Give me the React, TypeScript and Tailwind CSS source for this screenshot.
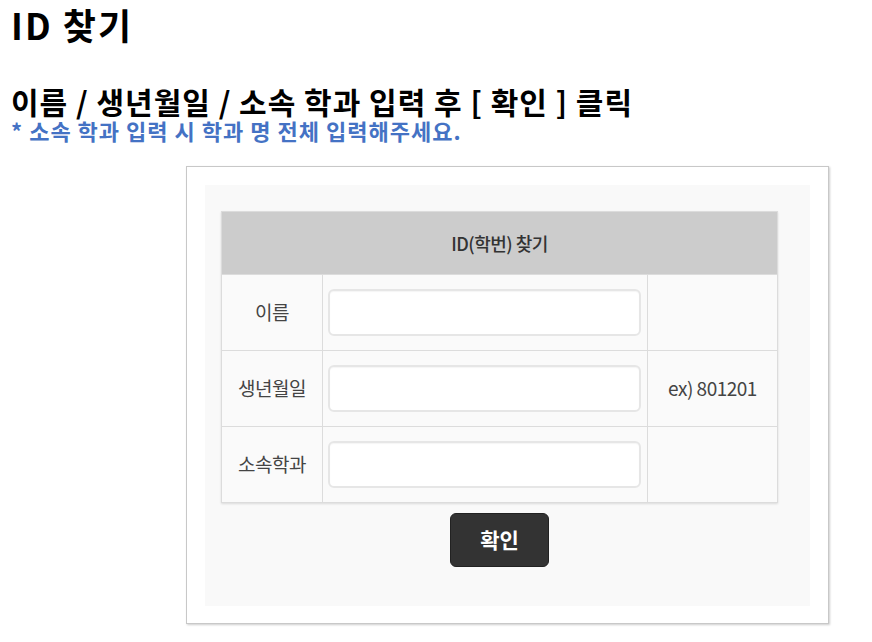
const font = "font-['Noto_Sans_CJK_KR','Noto_Sans',sans-serif]";

const rows = [
  { label: "이름", hint: "" },
  { label: "생년월일", hint: "ex) 801201" },
  { label: "소속학과", hint: "" },
];

export default function App() {
  return (
    <div className={`${font} min-h-[642px] bg-white text-black`}>
      <div className="pl-[11px]">
        <h1 className="h-[50px] text-[36px] font-bold leading-[49px] tracking-[2px]">ID 찾기</h1>
        <h2 className="mt-[35px] h-[32px] text-[30px] font-bold leading-[32px] tracking-[1px]">
          이름 / 생년월일 / 소속 학과 입력 후 [ 확인 ] 클릭
        </h2>
        <p className="h-[26px] text-[22px] font-bold leading-[26px] tracking-[1px] text-[#4472c4]">
          * 소속 학과 입력 시 학과 명 전체 입력해주세요.
        </p>
      </div>

      {/* form box */}
      <div className="ml-[186px] mt-[23px] w-[643px] border border-[#c8c8c8] bg-white px-[18px] pt-[18px] pb-[17px] shadow-[1px_1px_2px_rgba(0,0,0,0.2)]">
        <div className="bg-[#f9f9f9] pt-[26px] pb-[39px] pl-[16px] pr-[32px]">
          <div className="border border-[#dcdcdc] shadow-[0_1px_2px_rgba(0,0,0,0.12)]">
            <div className="flex h-[62px] items-center justify-center bg-[#cccccc] text-[18px] font-medium tracking-[-0.5px] text-[#333]">
              ID(학번) 찾기
            </div>
            {rows.map((r) => (
              <div key={r.label} className="flex h-[76px] border-t border-[#dcdcdc] bg-[#fafafa]">
                <div className="flex w-[101px] items-center justify-center border-r border-[#dcdcdc] text-[19px] tracking-[-0.5px] text-[#444]">
                  {r.label}
                </div>
                <div className="flex w-[325px] items-center border-r border-[#dcdcdc] pl-[5px] pr-[6px]">
                  <input
                    type="text"
                    className="h-[47px] w-full rounded-[6px] border-2 border-[#e6e6e6] bg-white shadow-[inset_0_1px_1px_rgba(0,0,0,0.04)] outline-none"
                  />
                </div>
                <div className="flex flex-1 items-center justify-center text-[19px] tracking-[-0.5px] text-[#444]">
                  {r.hint}
                </div>
              </div>
            ))}
          </div>
          <div className="mt-[10px] flex justify-center">
            <button className="h-[54px] w-[99px] rounded-[6px] border border-[#222] bg-[#333] text-[21px] font-bold text-white">
              확인
            </button>
          </div>
        </div>
      </div>
    </div>
  );
}
